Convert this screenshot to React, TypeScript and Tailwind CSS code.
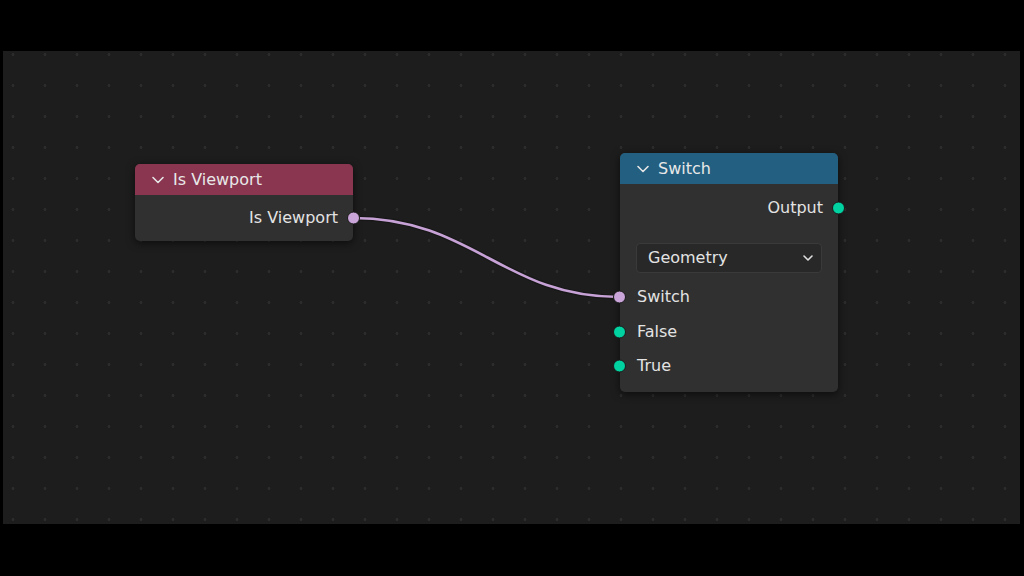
import React from "react";

const font = { fontFamily: '"DejaVu Sans", "Open Sans", sans-serif' };

function Chevron() {
  return (
    <svg width="14" height="10" viewBox="0 0 14 10" className="shrink-0">
      <path d="M2 2.5 L7 7.5 L12 2.5" fill="none" stroke="#e6e6e6" strokeWidth="1.6" strokeLinecap="round" strokeLinejoin="round" />
    </svg>
  );
}

export default function App() {
  return (
    <div className="w-[1024px] h-[576px] bg-black pt-[51px] pb-[52px] pl-[3px] pr-[4px]" style={font}>
      <div className="relative w-full h-full bg-[#1d1d1d] bg-[radial-gradient(circle,#2c2c2c_1.3px,transparent_1.6px)] bg-[length:32px_31px] bg-[position:-6px_-12px] overflow-hidden">
        {/* wire */}
        <svg className="absolute inset-0" width="1017" height="473">
          <path d="M350 167 C 470 167, 500 246, 616 246" fill="none" stroke="#111" strokeWidth="5" opacity="0.5" />
          <path d="M350 167 C 470 167, 500 246, 616 246" fill="none" stroke="#c7a2d6" strokeWidth="2.6" />
        </svg>

        {/* Is Viewport node */}
        <div className="absolute left-[132px] top-[113px] w-[218px] rounded-[5px] bg-[#303030] shadow-[0_2px_8px_rgba(0,0,0,0.6)]">
          <div className="h-[31px] rounded-t-[5px] bg-[#8a3651] flex items-center gap-[8px] pl-[16px] text-[16px] text-[#e8e8e8]">
            <Chevron />
            <span>Is Viewport</span>
          </div>
          <div className="relative h-[46px] flex items-center justify-end pr-[15px] text-[16px] text-[#e3e3e3]">
            <span>Is Viewport</span>
            <span className="absolute right-[-7px] top-1/2 -translate-y-1/2 w-[13px] h-[13px] rounded-full bg-[#c9a5d9] border border-[#1a1a1a]" />
          </div>
        </div>

        {/* Switch node */}
        <div className="absolute left-[617px] top-[102px] w-[218px] h-[239px] rounded-[5px] bg-[#303030] shadow-[0_2px_8px_rgba(0,0,0,0.6)]">
          <div className="h-[31px] rounded-t-[5px] bg-[#235f80] flex items-center gap-[8px] pl-[16px] text-[16px] text-[#e8e8e8]">
            <Chevron />
            <span>Switch</span>
          </div>
          <div className="relative h-[48px] flex items-center justify-end pr-[15px] text-[16px] text-[#e3e3e3]">
            <span>Output</span>
            <span className="absolute right-[-7px] top-1/2 -translate-y-1/2 w-[13px] h-[13px] rounded-full bg-[#00d2a1] border border-[#1a1a1a]" />
          </div>
          <div className="px-[16px] pt-[11px]">
            <div className="h-[30px] rounded-[4px] bg-[#282828] border border-[#3a3a3a] flex items-center justify-between pl-[11px] pr-[6px] text-[16px] text-[#e3e3e3]">
              <span>Geometry</span>
              <svg width="14" height="10" viewBox="0 0 14 10">
                <path d="M3 3 L7 7 L11 3" fill="none" stroke="#e0e0e0" strokeWidth="1.6" strokeLinecap="round" strokeLinejoin="round" />
              </svg>
            </div>
          </div>
          <div className="flex flex-col pt-[7px] text-[16px] text-[#e3e3e3]">
            {[
              { label: "Switch", color: "#c9a5d9" },
              { label: "False", color: "#00d2a1" },
              { label: "True", color: "#00d2a1" },
            ].map((r) => (
              <div key={r.label} className="relative h-[34.5px] flex items-center pl-[17px]">
                <span className="absolute left-[-7px] top-1/2 -translate-y-1/2 w-[13px] h-[13px] rounded-full border border-[#1a1a1a]" style={{ backgroundColor: r.color }} />
                <span>{r.label}</span>
              </div>
            ))}
          </div>
        </div>
      </div>
    </div>
  );
}
